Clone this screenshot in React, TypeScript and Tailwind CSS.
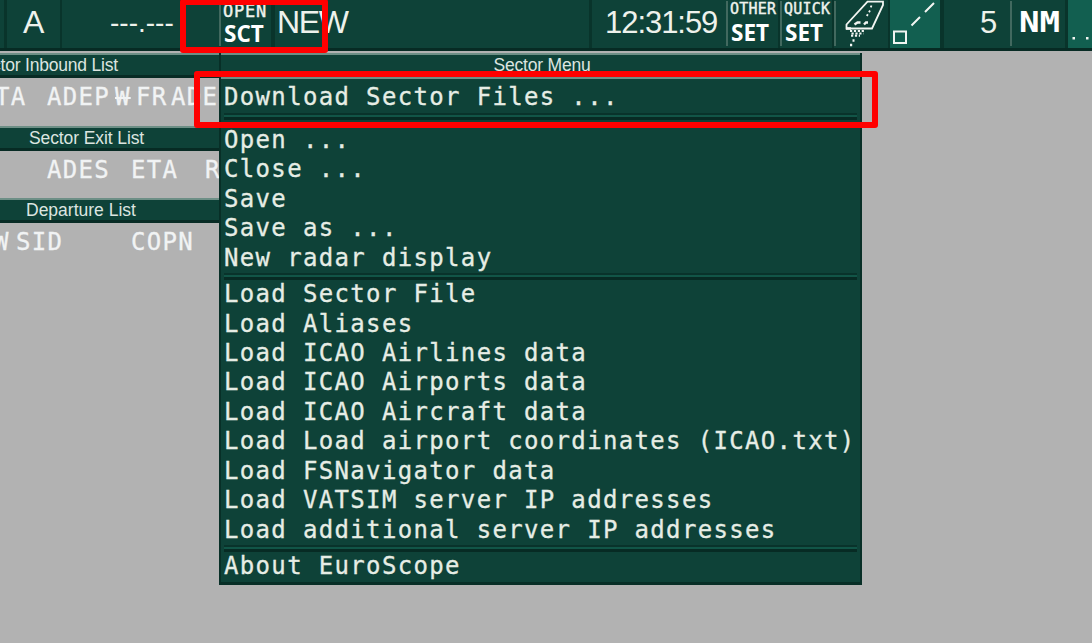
import type { ReactNode } from "react";

const MONO = "font-['DejaVu_Sans_Mono','Liberation_Mono',monospace]";
const SANS = "font-['Liberation_Sans',Arial,sans-serif]";

function Cell({ className = "", children }: { className?: string; children?: ReactNode }) {
  return <div className={`h-full shrink-0 overflow-hidden whitespace-nowrap ${className}`}>{children}</div>;
}

function Dark({ className = "w-[3px]" }: { className?: string }) {
  return <div className={`h-full shrink-0 bg-[#09342b] ${className}`} />;
}

function Light() {
  return <div className="mt-px h-[45px] w-[2px] shrink-0 bg-[#42695f]" />;
}

function StackButton({ top, bottom, className = "", topClass = "text-[15px] tracking-[0.25px]" }: { top: string; bottom: string; className?: string; topClass?: string }) {
  return (
    <Cell className={`flex flex-col ${className}`}>
      <span className={`${MONO} leading-[18px] [-webkit-text-stroke:0.4px] ${topClass}`}>{top}</span>
      <span className="mt-[3px] pl-[1px] font-['Open_Sans',sans-serif] text-[22.5px] leading-[24px] font-bold text-white">{bottom}</span>
    </Cell>
  );
}

function Toolbar() {
  return (
    <header className="flex h-[51px] w-[1092px] shrink-0 overflow-hidden border-b-[3px] border-[#072b24] bg-[#0e4238] text-[#eef2ec]">
      <Cell className="w-[4px]" />
      <Dark />
      <Cell className={`${SANS} w-[53px] pl-[16px] pt-[5px] text-[32px] leading-[34px]`}>A</Cell>
      <Dark className="w-[2px]" />
      <Cell className={`${SANS} w-[157px] pl-[48px] pt-[6px] text-[28px] leading-[34px]`}>---.---</Cell>
      <Light />
      <StackButton top="OPEN" bottom="SCT" className="w-[50px] pl-[2px] pt-px" topClass="relative top-[1px] text-[17px] tracking-[0.8px]" />
      <Dark className="w-[4px]" />
      <Cell className={`${SANS} w-[314px] pl-[2px] pt-[5px] text-[32px] leading-[34px] tracking-[-1.4px]`}>NEW</Cell>
      <Dark />
      <Cell className={`${SANS} w-[134px] pl-[13px] pt-[6px] text-[31px] leading-[34px] tracking-[-1.05px]`}>12:31:59</Cell>
      <Light />
      <StackButton top="OTHER" bottom="SET" className="w-[50px] pl-[2px]" />
      <Dark className="w-[2px]" />
      <Light />
      <StackButton top="QUICK" bottom="SET" className="w-[50px] pl-[2px]" />
      <Dark className="w-[2px]" />
      <Light />
      <Cell className="w-[52px]">
        <svg width="52" height="48" viewBox="837 0 52 48" fill="none" stroke="#f2f5f2" strokeWidth="1.8">
          <path d="M868.5 1.7H884V5L873 28.5H847.5V24.5Z" />
          <path d="M872.5 5.5l-1.5 3.5 M871 10.5l-4 7" strokeDasharray="2 2.4" />
          <path d="M855.5 24.5l3-2h3 M865 24.5l2-2h2" strokeWidth="2.4" />
          <path d="M851 31h15M852.5 33.4h12M852 35.8h9" strokeWidth="2" strokeDasharray="2.2 1.7" />
          <path d="M847 28.5h5M853.5 40.5h2M851 45h2.2" strokeWidth="2.4" />
        </svg>
      </Cell>
      <Dark className="w-[2px]" />
      <Cell className="w-[50px] bg-[#125f50]">
        <svg width="50" height="48" viewBox="891 0 50 48" fill="none" stroke="#f2f5f2" strokeWidth="2">
          <path d="M895 31.5h12v11.5h-12Z M912.5 25.5l8.5-8.5 M926 12l9-9" />
        </svg>
      </Cell>
      <Dark className="w-[4px]" />
      <Cell className={`${SANS} w-[66px] pl-[36px] pt-[6px] text-[31px] leading-[34px] tracking-[-1px]`}>5</Cell>
      <Light />
      <Cell className={`${MONO} w-[53px] pl-[7px] pt-[5px] text-[28px] leading-[35px] font-bold text-white`}>
        <span className="inline-block origin-left scale-x-[1.22]">NM</span>
      </Cell>
      <Dark />
      <Cell className="w-[24px] bg-[#125f50]">
        <svg width="24" height="48" viewBox="0 0 24 48" fill="#f2f5f2">
          <path d="M4.5 37h2.5v2.5h-2.5Z M18 37h2.5v2.5h-2.5Z" />
        </svg>
      </Cell>
    </header>
  );
}

function ListBlock({ title, titleClass, children }: { title: string; titleClass: string; children: ReactNode }) {
  return (
    <section className="h-[72.7px] shrink-0">
      <h2 className={`${SANS} h-[25px] border-t-2 border-b-[3px] border-t-[#6d8f86] border-b-[#072b24] bg-[#0e4238] text-[17.5px] leading-[21px] whitespace-nowrap text-[#dce5e0] ${titleClass}`}>
        {title}
      </h2>
      <div className={`${MONO} flex h-[38px] overflow-hidden text-[24px] leading-[38px] tracking-[1.3px] whitespace-pre text-[#f1f3f4] [-webkit-text-stroke:0.3px]`}>{children}</div>
    </section>
  );
}

function MenuItem({ children }: { children: ReactNode }) {
  return <li className="h-[29.45px] pl-[3px] leading-[29.45px] whitespace-pre">{children}</li>;
}

function Separator() {
  return <li className="mr-[3px] ml-[3px] h-[7px] border-t-2 border-b-[3px] border-t-[#09332b] border-b-[#072b24] bg-[#115547]" />;
}

const fileItems = ["Open ...", "Close ...", "Save", "Save as ...", "New radar display"];
const loadItems = [
  "Load Sector File",
  "Load Aliases",
  "Load ICAO Airlines data",
  "Load ICAO Airports data",
  "Load ICAO Aircraft data",
  "Load Load airport coordinates (ICAO.txt)",
  "Load FSNavigator data",
  "Load VATSIM server IP addresses",
  "Load additional server IP addresses",
];

function SectorMenu() {
  return (
    <nav className="absolute top-[53px] left-[219px] h-[532px] w-[643px] border-x-2 border-b-[3px] border-[#082f27] bg-[#0e4238]">
      <h2 className={`${SANS} h-[24px] border-t-2 border-[#6d8f86] pl-[3px] text-center text-[17.5px] leading-[21px] tracking-[-0.2px] text-[#dce5e0]`}>Sector Menu</h2>
      <ul className={`${MONO} border-t-2 border-[#6d8f86] pt-[4px] text-[24px] tracking-[1.34px] text-[#e6ede5] [-webkit-text-stroke:0.3px]`}>
        <MenuItem>Download Sector Files ...</MenuItem>
        <li className="h-[0.5px]" />
        <Separator />
        <li className="h-[6px]" />
        {fileItems.map((item) => (
          <MenuItem key={item}>{item}</MenuItem>
        ))}
        <Separator />
        {loadItems.map((item) => (
          <MenuItem key={item}>{item}</MenuItem>
        ))}
        <Separator />
        <MenuItem>About EuroScope</MenuItem>
      </ul>
    </nav>
  );
}

export default function App() {
  return (
    <div className="relative flex h-[643px] w-[1092px] flex-col overflow-hidden bg-[#b2b2b2]">
      <Toolbar />
      <main className="flex w-[219px] flex-col overflow-hidden pt-[2px]">
        <ListBlock title="Sector Inbound List" titleClass="-indent-[29px] tracking-[-0.2px]">
          <span className="-ml-[5px] w-[52px] shrink-0">TA</span>
          <span className="w-[68px] shrink-0">ADEP</span>
          <span className="w-[21px] shrink-0 line-through decoration-2">W</span>
          <span className="w-[35px] shrink-0">FR</span>
          <span className="shrink-0">ADE</span>
        </ListBlock>
        <ListBlock title="Sector Exit List" titleClass="pl-[29px] tracking-[-0.1px]">
          <span className="ml-[47px] w-[84px] shrink-0">ADES</span>
          <span className="w-[74px] shrink-0">ETA</span>
          <span className="shrink-0">R</span>
        </ListBlock>
        <ListBlock title="Departure List" titleClass="pl-[26px]">
          <span className="-ml-[6px] w-[22px] shrink-0">W</span>
          <span className="w-[115px] shrink-0">SID</span>
          <span className="shrink-0">COPN</span>
        </ListBlock>
      </main>
      <SectorMenu />
      <div className="absolute top-[-1px] left-[180px] h-[54px] w-[148px] rounded-[3px] border-[6px] border-[#ff0000]" />
      <div className="absolute top-[71px] left-[194px] h-[57px] w-[684px] rounded-[3px] border-[6px] border-[#ff0000]" />
    </div>
  );
}
